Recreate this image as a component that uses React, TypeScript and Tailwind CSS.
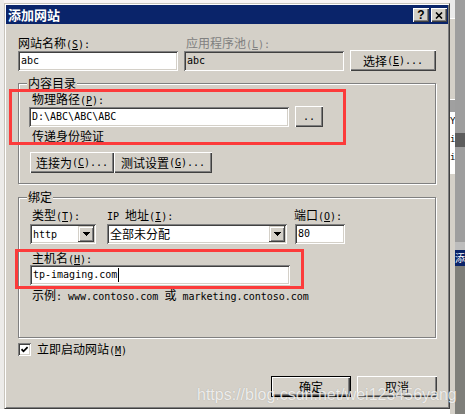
import React from "react";

type Run = { t: string; k: "c" | "a" | "u" };

// "&S" marks the mnemonic letter; ASCII runs use a 6px-wide mono like SimSun
function Txt({ s }: { s: string }): React.ReactElement {
  const runs: Run[] = [];
  for (let i = 0; i < s.length; i++) {
    let ch = s[i];
    let k: Run["k"];
    if (ch === "&" && i + 1 < s.length) {
      i++;
      ch = s[i];
      k = "u";
    } else {
      k = ch.charCodeAt(0) < 128 ? "a" : "c";
    }
    const last = runs[runs.length - 1];
    if (last && last.k === k && k !== "u") last.t += ch;
    else runs.push({ t: ch, k });
  }
  return (
    <>
      {runs.map((r, i) =>
        r.k === "c" ? (
          <span key={i}>{r.t}</span>
        ) : r.k === "u" ? (
          <span key={i} className="font-['DejaVu_Sans_Mono',monospace] text-[10px] underline underline-offset-[1px]">
            {r.t}
          </span>
        ) : (
          <span key={i} className="font-['DejaVu_Sans_Mono',monospace] text-[10px]">
            {r.t}
          </span>
        ),
      )}
    </>
  );
}

function Label({ s, className = "" }: { s: string; className?: string }): React.ReactElement {
  return (
    <div className={`h-[14px] whitespace-pre leading-[14px] ${className}`}>
      <Txt s={s} />
    </div>
  );
}

function Field({
  w,
  value,
  disabled = false,
  cursor = false,
}: {
  w: string;
  value: string;
  disabled?: boolean;
  cursor?: boolean;
}): React.ReactElement {
  return (
    <div
      className={`${w} flex h-[20px] items-center whitespace-pre pl-[3px] shadow-[inset_1px_1px_0_#808080,inset_-1px_-1px_0_#ffffff,inset_2px_2px_0_#404040,inset_-2px_-2px_0_#d4d0c8] ${
        disabled ? "bg-[#d4d0c8]" : "bg-white"
      }`}
    >
      <Txt s={value} />
      {cursor ? <span className="ml-[1px] inline-block h-[14px] w-[1px] bg-black" /> : null}
    </div>
  );
}

function Button({
  w,
  label,
  isDefault = false,
  className = "",
}: {
  w: string;
  label: string;
  isDefault?: boolean;
  className?: string;
}): React.ReactElement {
  return (
    <div
      className={`${w} flex h-[21px] items-center justify-center whitespace-pre bg-[#d4d0c8] ${
        isDefault
          ? "border border-black shadow-[inset_1px_1px_0_#ffffff,inset_-1px_-1px_0_#404040,inset_-2px_-2px_0_#808080]"
          : "shadow-[inset_1px_1px_0_#ffffff,inset_-1px_-1px_0_#404040,inset_-2px_-2px_0_#808080]"
      } ${className}`}
    >
      <Txt s={label} />
    </div>
  );
}

function Arrow(): React.ReactElement {
  return (
    <div className="flex h-[16px] w-[16px] items-center justify-center bg-[#d4d0c8] shadow-[inset_-1px_-1px_0_#404040,inset_1px_1px_0_#d4d0c8,inset_2px_2px_0_#ffffff,inset_-2px_-2px_0_#808080]">
      <svg width="7" height="4" viewBox="0 0 7 4" shapeRendering="crispEdges">
        <path d="M0 0h7v1h-1v1h-1v1h-1v1h-1v-1h-1v-1h-1v-1h-1z" fill="#000" />
      </svg>
    </div>
  );
}

function Select({ w, value }: { w: string; value: string }): React.ReactElement {
  return (
    <div className={`${w} flex h-[20px] items-center justify-between bg-white pl-[3px] pr-[2px] shadow-[inset_1px_1px_0_#808080,inset_-1px_-1px_0_#ffffff,inset_2px_2px_0_#404040,inset_-2px_-2px_0_#d4d0c8]`}>
      <div className="whitespace-pre">
        <Txt s={value} />
      </div>
      <Arrow />
    </div>
  );
}

function Group({
  title,
  h,
  children,
}: {
  title: string;
  h: string;
  children: React.ReactNode;
}): React.ReactElement {
  return (
    <div className={`relative ml-[12px] w-[418px] ${h} border border-[#808080] shadow-[inset_1px_1px_0_#ffffff,1px_1px_0_#ffffff]`}>
      <div className="absolute left-[8px] top-[-8px] bg-[#d4d0c8] px-[1px] leading-[14px]">{title}</div>
      {children}
    </div>
  );
}

function TitleButton({ children }: { children: React.ReactNode }): React.ReactElement {
  return (
    <div className="flex h-[14px] w-[16px] items-center justify-center bg-[#d4d0c8] shadow-[inset_1px_1px_0_#ffffff,inset_-1px_-1px_0_#404040,inset_-2px_-2px_0_#808080]">
      {children}
    </div>
  );
}

export default function App(): React.ReactElement {
  return (
    <div className="relative flex h-[414px] w-[465px] overflow-hidden bg-white font-['Noto_Sans_CJK_SC',sans-serif] text-[12px] leading-[14px] text-black">
      <div className="h-[409px] w-[4px] bg-[#ecebe9]" />

      <div className="flex w-[446px] flex-col">
        <div className="h-[3px] bg-[#f8f4f4]" />
        <div className="flex h-[406px] flex-col border border-b-[#404040] border-l-[#c8c4bc] border-r-[#404040] border-t-[#c8c4bc] bg-[#d4d0c8] shadow-[inset_1px_1px_0_#ffffff,inset_-1px_-1px_0_#808080] p-[1px]">
          {/* title bar */}
          <div className="flex h-[19px] items-start justify-between bg-[#0a246a] pr-[1px]">
            <div className="ml-[2px] mt-[1px] text-[13px] font-bold leading-[17px] text-white">添加网站</div>
            <div className="mt-[3px] flex gap-[2px]">
              <TitleButton>
                <span className="font-['Liberation_Sans',sans-serif] text-[12px] font-bold leading-[12px]">?</span>
              </TitleButton>
              <TitleButton>
                <svg width="8" height="7" viewBox="0 0 8 7">
                  <path d="M1 0.5 L7 6.5 M7 0.5 L1 6.5" stroke="#000" strokeWidth="1.6" />
                </svg>
              </TitleButton>
            </div>
          </div>

          {/* row 1 */}
          <div className="ml-[12px] mt-[12px] flex">
            <div className="flex w-[160px] flex-col">
              <Label s="网站名称(&S):" />
              <div className="mt-[1px]">
                <Field w="w-[160px]" value="abc" />
              </div>
            </div>
            <div className="ml-[6px] flex w-[160px] flex-col">
              <Label s="应用程序池(&L):" className="ml-[2px] text-[#808080]" />
              <div className="mt-[1px]">
                <Field w="w-[160px]" value="abc" disabled />
              </div>
            </div>
            <Button w="w-[86px]" label="选择(&E)..." className="ml-[6px] self-end" />
          </div>

          {/* 内容目录 */}
          <div className="mt-[12px]">
            <Group title="内容目录" h="h-[101px]">
              <div className="absolute left-[-10px] top-[5px] h-[56px] w-[337px] border-[3px] border-[#fc3b3b]" />
              <div className="flex flex-col pl-[10px] pt-[8px]">
                <Label s="物理路径(&P):" className="ml-[3px]" />
                <div className="flex items-end">
                  <Field w="w-[260px]" value="D:\ABC\ABC\ABC" />
                  <Button w="w-[28px]" label=".." className="ml-[6px]" />
                </div>
                <Label s="传递身份验证" className="ml-[3px] mt-[2px]" />
                <div className="ml-[1px] mt-[9px] flex">
                  <Button w="w-[84px]" label="连接为(&C)..." />
                  <Button w="w-[98px]" label="测试设置(&G)..." />
                </div>
              </div>
            </Group>
          </div>

          {/* 绑定 */}
          <div className="mt-[13px]">
            <Group title="绑定" h="h-[141px]">
              <div className="absolute left-[-4px] top-[51px] h-[40px] w-[289px] border-[3px] border-[#fc3b3b]" />
              <div className="flex flex-col pl-[11px] pt-[10px]">
                <div className="flex">
                  <div className="flex w-[66px] flex-col">
                    <Label s="类型(&T):" className="ml-[2px]" />
                    <div className="mt-[2px]">
                      <Select w="w-[66px]" value="http" />
                    </div>
                  </div>
                  <div className="ml-[11px] flex w-[180px] flex-col">
                    <Label s="IP 地址(&I):" />
                    <div className="mt-[2px]">
                      <Select w="w-[180px]" value="全部未分配" />
                    </div>
                  </div>
                  <div className="ml-[8px] flex w-[50px] flex-col">
                    <Label s="端口(&O):" className="ml-[-1px]" />
                    <div className="mt-[2px]">
                      <Field w="w-[50px]" value="80" />
                    </div>
                  </div>
                </div>
                <Label s="主机名(&H):" className="ml-[2px] mt-[7px]" />
                <Field w="w-[260px]" value="tp-imaging.com" cursor />
                <Label s="示例: www.contoso.com 或 marketing.contoso.com" className="ml-[2px] mt-[3px]" />
              </div>
            </Group>
          </div>

          {/* start now */}
          <div className="ml-[12px] mt-[4px] flex h-[14px] items-center">
            <div className="flex h-[13px] w-[13px] items-center justify-center bg-white shadow-[inset_1px_1px_0_#808080,inset_-1px_-1px_0_#ffffff,inset_2px_2px_0_#404040,inset_-2px_-2px_0_#d4d0c8]">
              <svg width="7" height="7" viewBox="0 0 7 7">
                <path d="M0.5 3.2 L2.5 5.3 L6.6 1.1" stroke="#000" strokeWidth="1.8" fill="none" />
              </svg>
            </div>
            <Label s="立即启动网站(&M)" className="ml-[6px]" />
          </div>

          {/* buttons */}
          <div className="mr-[11px] mt-[20px] flex justify-end gap-[6px]">
            <Button w="w-[80px]" label="确定" isDefault />
            <Button w="w-[80px]" label="取消" />
          </div>
        </div>
        <div className="flex-1 bg-white" />
      </div>

      {/* background behind the dialog */}
      <div className="flex w-[5px] flex-col">
        <div className="h-[18px] bg-[#ebebeb]" />
        <div className="h-[82px] border-y border-white bg-[#d4d0c8]" />
        <div className="h-[12px] bg-[#a0a0a0]" />
        <div className="flex h-[62px] flex-col bg-white font-['DejaVu_Sans_Mono',monospace] text-[9px] leading-[18px]">
          <span>Y</span>
          <span>i</span>
          <span>i</span>
        </div>
        <div className="flex-1 bg-[#d4d0c8]" />
      </div>
      <div className="flex w-[10px] flex-col">
        <div className="h-[133px] bg-[#9e9e9e]" />
        <div className="h-[14px] bg-[#5c5c5c]" />
        <div className="h-[95px] bg-[#9e9e9e]" />
        <div className="h-[8px] bg-[#bdbdbd]" />
        <div className="flex h-[16px] items-center justify-center overflow-hidden bg-[#0a246a] text-[10px] text-white">添</div>
        <div className="flex-1 bg-[#7f7f7a]" />
      </div>

      <div className="pointer-events-none absolute left-[197px] top-[387px] whitespace-pre font-['Liberation_Sans',sans-serif] text-[16px] leading-[16px] text-white/80 [text-shadow:0_0_1px_rgba(0,0,0,0.25)]">
        https://blog.csdn.net/wei123456yang
      </div>
    </div>
  );
}
